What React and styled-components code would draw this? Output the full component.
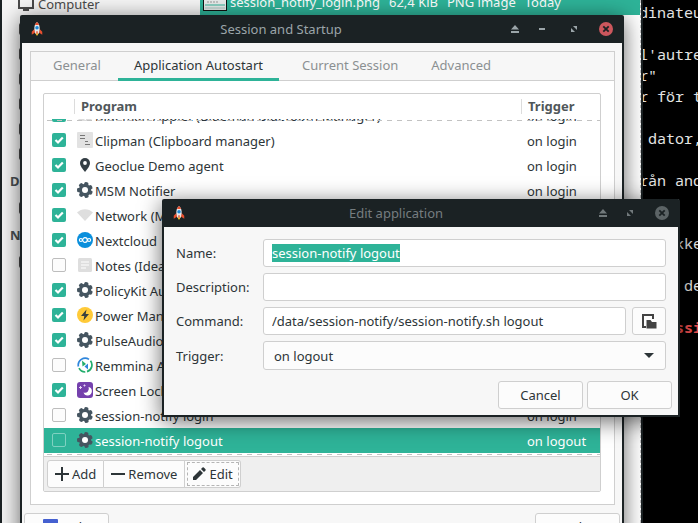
import React, { useEffect, useRef } from "react";
import styled, { createGlobalStyle, css } from "styled-components";

const teal = "#2eb398";
const dark = "#1b2224";
const ink = "#2d3538";
const line = "#cfcfcf";

const Global = createGlobalStyle`
  *, *::before, *::after { box-sizing: border-box; }
  body {
    margin: 0;
    background: #000;
    color: ${ink};
    font: 13px/18px "Noto Sans", sans-serif;
  }
  button, input, select { font: inherit; color: inherit; }
`;

const Desktop = styled.div`
  position: relative;
  height: 100vh;
  overflow: hidden;
`;

/* ---------- terminal ---------- */

const Terminal = styled.pre`
  position: absolute;
  top: 0;
  right: 0;
  bottom: 0;
  width: 59px;
  margin: 0;
  padding-top: 2px;
  overflow: hidden;
  background: #000;
  color: #e4e4e4;
  font: 15px/21px "Noto Sans Mono", "DejaVu Sans Mono", monospace;
`;

const Alert = styled.b`
  color: #ee4f4f;
`;

/* ---------- file manager ---------- */

const FileManager = styled.section`
  position: absolute;
  top: 0;
  left: 0;
  right: 55px;
  bottom: 0;
  display: grid;
  grid-template-columns: 198px 1fr;
  overflow: hidden;
  background: #fff;
  border: solid ${dark};
  border-width: 0 2px;
`;

const Places = styled.nav`
  display: flex;
  flex-direction: column;
  overflow: hidden;
  background: #f5f5f5;
`;

const Place = styled.a`
  display: flex;
  align-items: center;
  gap: 4px;
  flex: none;
  height: 25px;
  padding-left: 16px;
  color: #4a4a4a;
  text-decoration: none;

  &:first-child { margin-top: -9px; }
`;

const PlaceHeading = styled.h2`
  margin: 0;
  padding: 6px 0 0 8px;
  height: 29px;
  color: #4a5053;
  font-size: 13px;
  line-height: 18px;
`;

const Files = styled.div`
  border-right: 1px dashed #c4c4c4;
`;

const FileRow = styled.div`
  display: flex;
  align-items: center;
  gap: 3px;
  height: 27px;
  margin-top: -12px;
  padding-left: 3px;
  background: ${teal};
  color: #fff;
  white-space: nowrap;
`;

const FileText = styled.span`
  margin-right: 6px;
  line-height: 18px;
`;

/* ---------- windows ---------- */

const Window = styled.section`
  position: absolute;
  display: flex;
  flex-direction: column;
  background: #f7f7f7;
  border: 2px solid ${dark};
  border-top: 0;
  border-radius: 2px 2px 0 0;
  box-shadow: 0 4px 22px rgba(0, 0, 0, 0.6);
`;

const SessionWindow = styled(Window)`
  top: 15px;
  left: 20px;
  right: 74px;
`;

const EditDialog = styled(Window)`
  top: 199px;
  left: 162px;
  right: 18px;
`;

const TitleBar = styled.header`
  display: flex;
  align-items: center;
  gap: 1px;
  flex: none;
  height: 28px;
  padding-left: 8px;
  background: ${dark};
  color: ${(p) => (p.$inactive ? "#767d80" : "#9ba5a9")};
`;

const WindowIcon = styled.span`
  display: grid;
  width: 28px;
`;

const WindowTitle = styled.h1`
  flex: 1;
  margin: 0;
  font-size: 13px;
  font-weight: 400;
  line-height: 18px;
  text-align: center;
`;

const TitleButtons = styled.div`
  display: flex;
`;

const TitleButton = styled.button`
  display: grid;
  place-items: center;
  width: ${(p) => (p.$narrow ? 22 : 32)}px;
  height: 28px;
  padding: 0;
  background: none;
  border: 0;
`;

/* ---------- tabs ---------- */

const Notebook = styled.div`
  margin: 8px 7px 0 8px;
  background: #fff;
  border: 1px solid ${line};
`;

const TabList = styled.div`
  display: flex;
  height: 29px;
  padding-left: 6px;
  background: #f7f7f7;
  box-shadow: inset 0 -1px ${line};
`;

const Tab = styled.button`
  height: 29px;
  padding: 0 16px 3px;
  margin-right: 1px;
  background: none;
  border: 0;
  color: #8b9092;
  white-space: nowrap;

  &[aria-selected="true"] {
    margin-right: 7px;
    color: ${ink};
    box-shadow: inset 0 -3px ${teal};
  }
`;

const Panel = styled.div`
  padding: 12px 13px 12px 12px;
`;

/* ---------- autostart table ---------- */

const ListFrame = styled.div`
  border: 1px solid ${line};
  border-radius: 2px;
`;

const Table = styled.table`
  display: block;
`;

const rowGrid = css`
  display: grid;
  grid-template-columns: 31px 1fr 78px;
`;

const Head = styled.thead`
  display: block;
`;

const HeadRow = styled.tr`
  ${rowGrid}
  align-items: center;
  height: 25px;
`;

const HeadCell = styled.th`
  height: 15px;
  padding: 0 6px;
  border-right: 1px solid #dcdcdc;
  color: #50575a;
  font-size: 13px;
  line-height: 15px;
  text-align: left;

  &:last-child { border-right: 0; }
`;

const Body = styled.tbody`
  position: relative;
  display: flex;
  flex-direction: column;
  justify-content: flex-end;
  height: 338px;
  padding-bottom: 3px;
  overflow: hidden;
  border-bottom: 1px solid ${line};

  &::before, &::after {
    content: "";
    position: absolute;
    left: 3px;
    right: 0;
    height: 1px;
    background: repeating-linear-gradient(90deg, #c2c2c2 0 5px, transparent 5px 10px);
  }
  &::before { top: 1px; }
  &::after { bottom: 1px; }
`;

const Row = styled.tr`
  ${rowGrid}
  align-items: start;
  flex: none;
  height: 25px;
  background: ${(p) => (p.$selected ? teal : "transparent")};
  color: ${(p) => (p.$selected ? "#fff" : ink)};
`;

const Cell = styled.td`
  display: flex;
  align-items: center;
  gap: 2px;
  height: 24px;
  padding: 0 0 0 ${(p) => p.$pad}px;
  overflow: hidden;
  white-space: nowrap;
`;

const RowLabel = styled.label`
  padding-top: 2px;
`;

const tick = `url("data:image/svg+xml,%3Csvg xmlns='http://www.w3.org/2000/svg' viewBox='0 0 14 14'%3E%3Cpath d='M3.5 7l2.5 2.5 4.8-5' fill='none' stroke='white' stroke-width='2.2'/%3E%3C/svg%3E")`;

const Check = styled.input`
  appearance: none;
  flex: none;
  width: 14px;
  height: 14px;
  margin: 0;
  border: 1px solid ${(p) => (p.$selected ? "#7fd1c1" : "#bdbdbd")};
  border-radius: 2px;
  background: ${(p) => (p.$selected ? "transparent" : "#fcfcfc")};

  &:checked {
    border: 0;
    background: ${teal} ${tick};
  }
`;

const ListTools = styled.div`
  display: flex;
  padding: 3px;
  background: #efefef;
`;

const ToolButton = styled.button`
  display: flex;
  align-items: center;
  gap: 2px;
  height: 28px;
  padding: 0 7px 0 6px;
  background: #fcfcfc;
  border: 1px solid ${line};
  white-space: nowrap;

  & + & { border-left: 0; }
  &:first-child { border-radius: 3px 0 0 3px; }
  &:last-child {
    border-radius: 0 3px 3px 0;
    outline: 1px dashed #b5b5b5;
    outline-offset: -3px;
  }
`;

/* ---------- buttons and form ---------- */

const Button = styled.button`
  display: flex;
  align-items: center;
  justify-content: center;
  gap: 3px;
  width: 85px;
  height: 28px;
  padding: 0;
  background: #fcfcfc;
  border: 1px solid ${line};
  border-radius: 3px;
`;

const WindowActions = styled.footer`
  display: flex;
  justify-content: space-between;
  padding: 8px 2px;
`;

const Form = styled.form`
  display: grid;
  grid-template-columns: 81px 1fr;
  align-items: center;
  gap: 6px;
  padding: 12px 12px 0;
`;

const DialogActions = styled.footer`
  display: flex;
  justify-content: flex-end;
  gap: 4px;
  padding: 11px 6px 6px;
`;

const field = css`
  width: 100%;
  min-width: 0;
  height: 28px;
  padding: 0 8px;
  background: #fff;
  border: 1px solid ${line};
  border-radius: 3px;
  outline: none;
`;

const Input = styled.input`
  ${field}
  &::selection { background: ${teal}; color: #fff; }
`;

const CommandLine = styled.div`
  display: grid;
  grid-template-columns: 1fr 34px;
  gap: 6px;
`;

const BrowseButton = styled(Button)`
  width: 34px;
`;

const arrow = `url("data:image/svg+xml,%3Csvg xmlns='http://www.w3.org/2000/svg' viewBox='0 0 10 5'%3E%3Cpath d='M0 0h10L5 5z' fill='%232d3538'/%3E%3C/svg%3E")`;

const Select = styled.select`
  ${field}
  appearance: none;
  height: 29px;
  padding: 0 10px;
  background: #fcfcfc ${arrow} no-repeat right 11px center / 10px 5px;
`;

/* ---------- icons ---------- */

const Svg = ({ size = 16, box = 16, children }) => (
  <svg width={size} height={size} viewBox={`0 0 ${box} ${box}`} fill="none" aria-hidden="true">
    {children}
  </svg>
);

const Gear = () => (
  <Svg>
    <g fill="#455560">
      {[0, 1, 2, 3, 4, 5, 6].map((i) => (
        <path key={i} d="M5.500 3.400 6.200 .4Q8-.4 9.800 .4L10.500 3.400z" transform={`rotate(${12 + i * 51.43} 8 8)`} />
      ))}
      <circle cx="8" cy="8" r="6" />
    </g>
    <circle cx="8" cy="8" r="3" fill="#fff" />
  </Svg>
);

const Rocket = () => (
  <Svg size={14}>
    <path d="M5 8 2 11v3.500L6 12zM11 8l3 3v3.500L10 12z" fill="#e8502f" />
    <path d="M5.500 12h5L8 16z" fill="#ffc928" />
    <path d="M8 0C5.500 2 4.700 5 5 8.500L6 13h4l1-4.500C11.300 5 10.500 2 8 0z" fill="#e6e9eb" />
    <path d="M8 0C6.800 1 6 2.200 5.600 3.500h4.800C10 2.200 9.200 1 8 0z" fill="#e8502f" />
    <circle cx="8" cy="6.500" r="2" fill="#1b87d6" />
    <path d="M7.200 10.500h1.600v3H7.200z" fill="#e8502f" />
  </Svg>
);

const Clipboard = () => (
  <Svg>
    <rect width="16" height="16" rx="1" fill="#e2e2e2" />
    <path d="M3 3.500h5M3 6.500h5M8 9.500h3M8 12.500h5" stroke="#777" />
  </Svg>
);

const Pin = () => (
  <Svg>
    <path d="M8 1a5 5 0 0 0-5 5c0 3.500 5 9 5 9s5-5.500 5-9a5 5 0 0 0-5-5z" fill="#333e44" />
    <circle cx="8" cy="6" r="1.900" fill="#fff" />
  </Svg>
);

const Wifi = () => (
  <Svg>
    <path d="M0 5.500C4.500 1 11.500 1 16 5.500L8 14z" fill="#dedede" />
  </Svg>
);

const Cloud = () => (
  <Svg>
    <circle cx="8" cy="8" r="8" fill="#0a8fdc" />
    <g stroke="#fff" strokeWidth="1.200">
      <circle cx="8" cy="8" r="2.300" />
      <circle cx="3.900" cy="8" r="1.500" />
      <circle cx="12.100" cy="8" r="1.500" />
    </g>
  </Svg>
);

const Note = () => (
  <Svg>
    <rect x="1" y="1" width="14" height="14" rx="1.500" fill="#dedede" />
    <path d="M4 5h8M4 8h8M4 11h5" stroke="#fff" strokeWidth="1.200" />
  </Svg>
);

const Bolt = () => (
  <Svg>
    <circle cx="8" cy="8" r="8" fill="#ffca38" />
    <path d="M9.500 2.500 4 9h3.300L6.500 13.500 12 7H8.700z" fill="#37403f" />
  </Svg>
);

const Remote = () => (
  <Svg>
    <path d="M1.400 9.500A6.900 6.900 0 0 1 12 2.400" stroke="#2f86dc" strokeWidth="1.700" />
    <path d="M13.500 3.800A6.900 6.900 0 0 1 10 14.600" stroke="#22ad6c" strokeWidth="1.700" />
    <path d="M8.300 15A6.900 6.900 0 0 1 2 11.200" stroke="#22ad6c" strokeWidth="1.700" />
    <path d="M5 3.500 9 7 5.500 9.500z" fill="#22ad6c" />
    <path d="M11 6.500 7.500 9.500 11 12.500z" fill="#2f86dc" />
  </Svg>
);

const Moon = () => (
  <Svg>
    <rect width="16" height="16" rx="3" fill="#7541ad" />
    <path d="M11.500 5a4.300 4.300 0 1 1-5 5.500A4 4 0 0 0 11.500 5z" fill="#fff" />
    <path d="M3.500 4v3M2 5.500h3M7.500 2.500v2M6.500 3.500h2" stroke="#e6d8f5" />
  </Svg>
);

const Bluetooth = () => (
  <Svg>
    <rect x="1" width="14" height="14" rx="3" fill="#dcdcdc" />
    <path d="m5 5 6 5-3 3V2l3 3-6 5" stroke="#fff" />
  </Svg>
);

const Eject = ({ color }) => (
  <Svg size={8} box={8}>
    <path d="M4 0 8 4.500H0zM0 6h8v2H0z" fill={color} />
  </Svg>
);

const Minimize = () => (
  <Svg size={6} box={6}>
    <path d="M0 2h6v2H0z" fill="#9ba5a9" />
  </Svg>
);

const Maximize = ({ color }) => (
  <Svg size={6} box={6}>
    <path d="M2 0h4v4zM0 2l4 4H0z" fill={color} />
  </Svg>
);

const Close = ({ color }) => (
  <Svg size={14} box={14}>
    <circle cx="7" cy="7" r="7" fill={color} />
    <path d="m4.300 4.300 5.400 5.400M9.700 4.300 4.300 9.700" stroke={dark} strokeWidth="1.800" />
  </Svg>
);

const Monitor = () => (
  <Svg>
    <rect x="1" y="1" width="14" height="11" stroke="#4a4a4a" strokeWidth="2" />
    <path d="M5 14h6" stroke="#4a4a4a" strokeWidth="2" />
  </Svg>
);

const Folder = () => (
  <Svg>
    <rect x="2" y="3" width="13" height="10" rx="1" stroke="#4a4a4a" strokeWidth="2" />
  </Svg>
);

const Thumbnail = () => (
  <svg width="24" height="18" viewBox="0 0 24 18" aria-hidden="true">
    <rect x=".5" y=".5" width="23" height="17" fill="#e8eceb" stroke="#111" />
    <path d="M2 12h20" stroke={teal} />
    <path d="M2 15h20" stroke="#aac9c2" />
    <path d="M4 9h12" stroke="#999" strokeDasharray="2 1" />
  </svg>
);

const Plus = () => (
  <Svg>
    <path d="M8 1v14M1 8h14" stroke={ink} strokeWidth="2" />
  </Svg>
);

const Minus = () => (
  <Svg>
    <path d="M1 8h14" stroke={ink} strokeWidth="2" />
  </Svg>
);

const Pencil = () => (
  <Svg>
    <path d="M2 14v-3l7-7 3 3-7 7zM10 3l1.500-1.500q.7-.5 1.300 0l1.700 1.700q.5.700 0 1.300L13 6z" fill={ink} />
  </Svg>
);

const Browse = () => (
  <Svg>
    <path d="M5 14H2V2h10v4" stroke="#424242" strokeWidth="2" />
    <path d="M5.500 7h4l1.500 2h4.500v6.500h-10z" fill="#424242" />
  </Svg>
);

const HelpBook = () => (
  <Svg>
    <rect width="15" height="15" rx="1" fill="#4560d0" />
  </Svg>
);

const CloseMark = () => (
  <Svg>
    <path d="m4 5 8 8M12 5l-8 8" stroke={ink} strokeWidth="2" />
  </Svg>
);

/* ---------- data ---------- */

const terminalLines = [
  "dinateur", "", "l'autre", "r\"", "r för t", "", " dator,", "", "rån and",
  "", "", "    kke", "", "     de", "",
];

const programs = [
  ["Blueman Applet (Blueman Bluetooth Manager)", Bluetooth, true, "on login"],
  ["Clipman (Clipboard manager)", Clipboard, true, "on login"],
  ["Geoclue Demo agent", Pin, true, "on login"],
  ["MSM Notifier", Gear, true, "on login"],
  ["Network (Manager Applet)", Wifi, true, "on login"],
  ["Nextcloud", Cloud, true, "on login"],
  ["Notes (Ideas and reminders)", Note, false, "on login"],
  ["PolicyKit Authentication Agent", Gear, true, "on login"],
  ["Power Manager", Bolt, true, "on login"],
  ["PulseAudio", Gear, true, "on login"],
  ["Remmina Applet", Remote, false, "on login"],
  ["Screen Locker", Moon, true, "on login"],
  ["session-notify login", Gear, false, "on login"],
  ["session-notify logout", Gear, false, "on logout"],
];

const tabs = ["General", "Application Autostart", "Current Session", "Advanced"];

function WindowBar({ title, inactive }) {
  const mark = inactive ? "#71797b" : "#9ba5a9";
  return (
    <TitleBar $inactive={inactive}>
      <WindowIcon><Rocket /></WindowIcon>
      <WindowTitle>{title}</WindowTitle>
      <TitleButtons>
        <TitleButton $narrow aria-label="Roll up"><Eject color={mark} /></TitleButton>
        {!inactive && <TitleButton aria-label="Minimize"><Minimize /></TitleButton>}
        <TitleButton aria-label="Maximize"><Maximize color={mark} /></TitleButton>
        <TitleButton aria-label="Close window"><Close color={inactive ? "#5c6466" : "#cc575d"} /></TitleButton>
      </TitleButtons>
    </TitleBar>
  );
}

function ProgramTable() {
  return (
    <Table>
      <Head>
        <HeadRow>
          <HeadCell aria-label="Enabled" />
          <HeadCell>Program</HeadCell>
          <HeadCell>Trigger</HeadCell>
        </HeadRow>
      </Head>
      <Body>
        {programs.map(([name, Icon, on, trigger], i) => {
          const selected = i === programs.length - 1;
          return (
            <Row key={name} $selected={selected}>
              <Cell $pad={8}>
                <Check type="checkbox" id={`program-${i}`} defaultChecked={on} $selected={selected} />
              </Cell>
              <Cell $pad={2}>
                <Icon />
                <RowLabel htmlFor={`program-${i}`}>{name}</RowLabel>
              </Cell>
              <Cell $pad={5}><RowLabel as="span">{trigger}</RowLabel></Cell>
            </Row>
          );
        })}
      </Body>
    </Table>
  );
}

export default function App() {
  const nameField = useRef(null);

  useEffect(() => {
    nameField.current.focus({ preventScroll: true });
    nameField.current.select();
  }, []);

  return (
    <Desktop>
      <Global />
      <Terminal>
        {terminalLines.join("\n")}
        {"\n    "}
        <Alert>ssi</Alert>
      </Terminal>

      <FileManager>
        <Places>
          <Place href="#computer"><Monitor />Computer</Place>
          {["Home", "Desktop", "Documents", "Downloads", "Music", "Trash"].map((name) => (
            <Place key={name} href={`#${name}`}><Folder />{name}</Place>
          ))}
          <PlaceHeading>Devices</PlaceHeading>
          <Place href="#disk"><Folder />Disk</Place>
          <PlaceHeading>Network</PlaceHeading>
          <Place href="#browse"><Folder />Browse Network</Place>
        </Places>
        <Files>
          <FileRow>
            <Thumbnail />
            <FileText>session_notify_login.png</FileText>
            <FileText>62,4 KiB</FileText>
            <FileText>PNG image</FileText>
            <FileText>Today</FileText>
          </FileRow>
        </Files>
      </FileManager>

      <SessionWindow>
        <WindowBar title="Session and Startup" />
        <Notebook>
          <TabList role="tablist">
            {tabs.map((name, i) => (
              <Tab key={name} role="tab" aria-selected={i === 1}>{name}</Tab>
            ))}
          </TabList>
          <Panel role="tabpanel">
            <ListFrame>
              <ProgramTable />
              <ListTools>
                <ToolButton><Plus />Add</ToolButton>
                <ToolButton><Minus />Remove</ToolButton>
                <ToolButton><Pencil />Edit</ToolButton>
              </ListTools>
            </ListFrame>
          </Panel>
        </Notebook>
        <WindowActions>
          <Button><HelpBook />Help</Button>
          <Button><CloseMark />Close</Button>
        </WindowActions>
      </SessionWindow>

      <EditDialog role="dialog" aria-label="Edit application">
        <WindowBar title="Edit application" inactive />
        <Form id="edit" onSubmit={(e) => e.preventDefault()}>
          <label htmlFor="name">Name:</label>
          <Input id="name" ref={nameField} defaultValue="session-notify logout" />
          <label htmlFor="description">Description:</label>
          <Input id="description" />
          <label htmlFor="command">Command:</label>
          <CommandLine>
            <Input id="command" defaultValue="/data/session-notify/session-notify.sh logout" />
            <BrowseButton type="button" aria-label="Browse"><Browse /></BrowseButton>
          </CommandLine>
          <label htmlFor="trigger">Trigger:</label>
          <Select id="trigger" defaultValue="on logout">
            <option>on login</option>
            <option>on logout</option>
          </Select>
        </Form>
        <DialogActions>
          <Button>Cancel</Button>
          <Button form="edit">OK</Button>
        </DialogActions>
      </EditDialog>
    </Desktop>
  );
}
